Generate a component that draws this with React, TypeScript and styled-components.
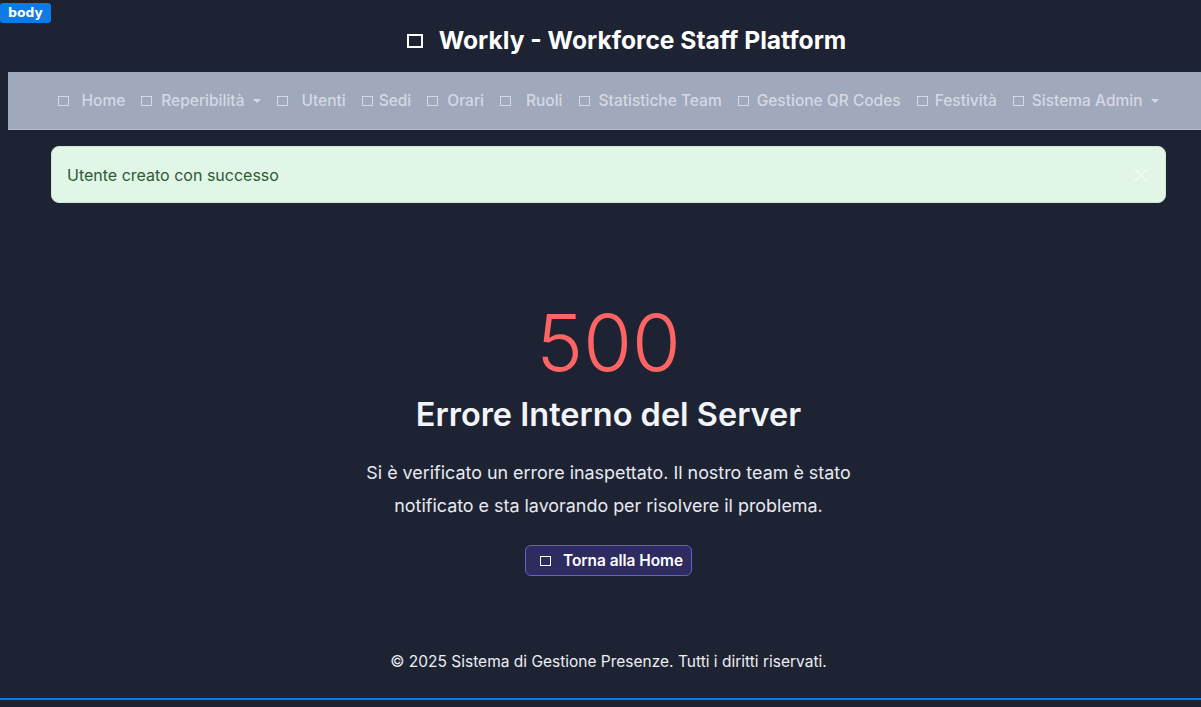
import React from "react";
import styled, { createGlobalStyle } from "styled-components";

const Global = createGlobalStyle`
  html { overflow: hidden; background: #1e2333; }
  body {
    margin: 8px;
    width: 1201px;
    background: #1e2333;
    font-family: Inter, "Noto Sans", "Liberation Sans", sans-serif;
    color: #eef0f4;
  }
`;

const Page = styled.div`
  display: flex;
  flex-direction: column;
  min-height: 691px;
`;

const Badge = styled.div`
  position: fixed;
  left: 0;
  top: 3px;
  height: 20px;
  padding: 0 8px;
  background: #0b7be8;
  color: #fff;
  border-radius: 3px;
  font-family: "DejaVu Sans", sans-serif;
  font-size: 12.5px;
  font-weight: 600;
  line-height: 20px;
  z-index: 10;
`;

const Header = styled.header`
  display: flex;
  justify-content: center;
  align-items: center;
  padding: 18px 0 17px 36px;
`;

const Title = styled.h1`
  margin: 0;
  display: flex;
  align-items: center;
  gap: 16px;
  font-size: 24.6px;
  font-weight: 700;
  line-height: 29px;
  color: #ffffff;
`;

const Box = styled.span<{ $w: number; $h: number; $b: number }>`
  display: inline-block;
  flex: none;
  width: ${(p) => p.$w}px;
  height: ${(p) => p.$h}px;
  border: ${(p) => p.$b}px solid currentColor;
  box-sizing: border-box;
`;

const Nav = styled.nav`
  display: flex;
  justify-content: center;
  align-items: center;
  height: 57px;
  background: #a0a8bc;
  border-bottom: 1px solid #b7bdcb;
  margin-right: -8px;
  padding-right: 8px;
`;

const NavLink = styled.a<{ $gap: number }>`
  display: flex;
  align-items: center;
  gap: ${(p) => p.$gap}px;
  padding: 0 8px;
  color: #d5d9e3;
  font-size: 15.5px;
  font-weight: 500;
  white-space: nowrap;
`;

const Caret = styled.span`
  display: inline-block;
  width: 0;
  height: 0;
  border-left: 4px solid transparent;
  border-right: 4px solid transparent;
  border-top: 4px solid currentColor;
`;

const Alert = styled.div`
  margin: 16px 43px 0;
  height: 57px;
  box-sizing: border-box;
  display: flex;
  align-items: center;
  justify-content: space-between;
  padding: 0 16px 0 15px;
  background: #e2f6e7;
  border: 1px solid #cfe6d5;
  border-radius: 8px;
  color: #2c5a35;
  font-size: 16px;
`;

const Close = styled.svg`
  width: 16px;
  height: 16px;
`;

const Main = styled.main`
  display: flex;
  flex-direction: column;
  align-items: center;
  text-align: center;
  padding-top: 99px;
`;

const Code = styled.div`
  font-size: 79px;
  font-weight: 300;
  line-height: 80px;
  color: #ff6464;
`;

const Heading = styled.h2`
  margin: 13px 0 0;
  font-size: 32.5px;
  font-weight: 600;
  line-height: 40px;
  color: #f2f4f8;
`;

const Text = styled.p`
  margin: 21px 0 0;
  max-width: 510px;
  font-size: 17.9px;
  line-height: 33px;
  color: #e8eaf0;
`;

const Button = styled.a`
  margin-top: 23px;
  display: flex;
  align-items: center;
  gap: 12px;
  height: 31px;
  box-sizing: border-box;
  padding: 0 8px 0 14px;
  background: #2e2b5e;
  border: 1px solid #6b5bd8;
  border-radius: 6px;
  color: #ffffff;
  font-size: 15.4px;
  font-weight: 600;
`;

const Footer = styled.footer`
  margin-top: 75px;
  text-align: center;
  font-size: 15.5px;
  line-height: 22px;
  color: #eceef2;
`;

const Line = styled.div`
  position: fixed;
  left: 0;
  right: 0;
  top: 698px;
  height: 2px;
  background: #0b7be8;
`;

const items: { label: string; gap: number; caret?: boolean }[] = [
  { label: "Home", gap: 12 },
  { label: "Reperibilità", gap: 9, caret: true },
  { label: "Utenti", gap: 13 },
  { label: "Sedi", gap: 6 },
  { label: "Orari", gap: 9 },
  { label: "Ruoli", gap: 15 },
  { label: "Statistiche Team", gap: 9 },
  { label: "Gestione QR Codes", gap: 8 },
  { label: "Festività", gap: 7 },
  { label: "Sistema Admin", gap: 8, caret: true },
];

export default function App() {
  return (
    <>
      <Global />
      <Badge>body</Badge>
      <Page>
        <Header>
          <Title>
            <Box $w={16} $h={14} $b={2} />
            Workly - Workforce Staff Platform
          </Title>
        </Header>
        <Nav>
          {items.map((it) => (
            <NavLink key={it.label} $gap={it.gap}>
              <Box $w={11} $h={10} $b={1.5} />
              {it.label}
              {it.caret && <Caret />}
            </NavLink>
          ))}
        </Nav>
        <Alert>
          <span>Utente creato con successo</span>
          <Close viewBox="0 0 16 16">
            <path d="M2 2 L14 14 M14 2 L2 14" stroke="#f4faf5" strokeWidth="1.6" />
          </Close>
        </Alert>
        <Main>
          <Code>500</Code>
          <Heading>Errore Interno del Server</Heading>
          <Text>
            Si è verificato un errore inaspettato. Il nostro team è stato notificato e sta
            lavorando per risolvere il problema.
          </Text>
          <Button>
            <Box $w={11} $h={10} $b={1.5} />
            Torna alla Home
          </Button>
          <Footer>© 2025 Sistema di Gestione Presenze. Tutti i diritti riservati.</Footer>
        </Main>
      </Page>
      <Line />
    </>
  );
}
